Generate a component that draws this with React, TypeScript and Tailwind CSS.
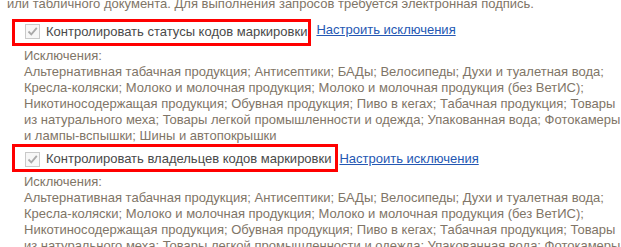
import React from "react";

const lines = [
  "Альтернативная табачная продукция; Антисептики; БАДы; Велосипеды; Духи и туалетная вода;",
  "Кресла-коляски; Молоко и молочная продукция; Молоко и молочная продукция (без ВетИС);",
  "Никотиносодержащая продукция; Обувная продукция; Пиво в кегах; Табачная продукция; Товары",
  "из натурального меха; Товары легкой промышленности и одежда; Упакованная вода; Фотокамеры",
  "и лампы-вспышки; Шины и автопокрышки",
];

function Check() {
  return (
    <span className="inline-flex h-[15px] w-[15px] shrink-0 items-center justify-center border border-[#c9c9c9] bg-[#f7f7f7]">
      <svg width="13" height="13" viewBox="0 0 13 13">
        <path d="M2.5 6.5 L5.3 9.3 L10.8 2.8" fill="none" stroke="#a9a9a9" strokeWidth="1.8" />
      </svg>
    </span>
  );
}

function Block({ label, boxClass, linkGap }: { label: string; boxClass: string; linkGap: string }) {
  return (
    <div>
      <div className="flex items-start">
        <div className={`ml-[12px] flex items-start border-[3px] border-[#ff0000] pl-[10px] ${boxClass}`}>
          <Check />
          <span className="ml-[6px] leading-[16px] text-[#4a4a4a]">{label}</span>
        </div>
        <a className={`leading-[16px] text-[#2457b3] underline ${linkGap}`}>Настроить исключения</a>
      </div>
      <div className="ml-[24px] mt-[2px] leading-[16px] text-[#7f7567]">
        <div>Исключения:</div>
        {lines.map((l) => (
          <div key={l} className="whitespace-nowrap">
            {l}
          </div>
        ))}
      </div>
    </div>
  );
}

export default function App() {
  return (
    <div
      className="h-[247px] w-[621px] overflow-hidden bg-white text-[13px]"
      style={{ fontFamily: '"Liberation Sans", Arial, sans-serif' }}
    >
      <div className="ml-[7px] mt-[-4px] leading-[16px] text-[#7f7567]">
        или табличного документа. Для выполнения запросов требуется электронная подпись.
      </div>
      <div className="mt-[7px]">
        <Block
          label="Контролировать статусы кодов маркировки"
          boxClass="pt-[2px] pb-[3px] pr-[1px]"
          linkGap="ml-[5px] mt-[3px]"
        />
      </div>
      <div className="mt-[0px]">
        <Block
          label="Контролировать владельцев кодов маркировки"
          boxClass="pt-[5px] pb-[2px] pr-[4px] [&>span:last-child]:mt-[-1px]"
          linkGap="ml-[1px] mt-[7px]"
        />
      </div>
    </div>
  );
}
